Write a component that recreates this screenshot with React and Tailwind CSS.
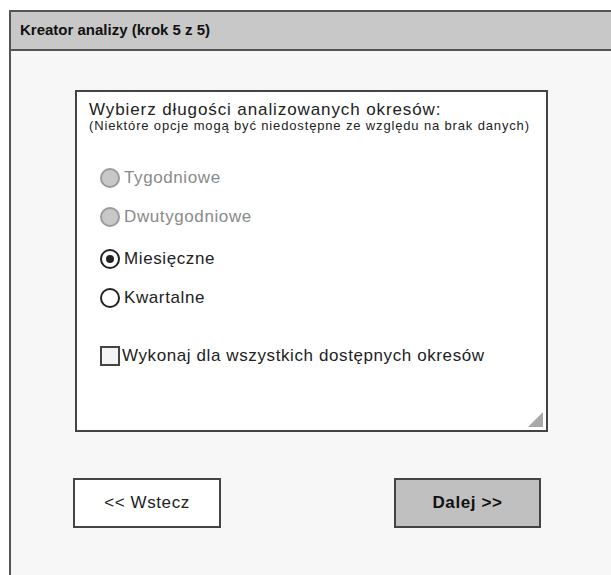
import React, { useState } from 'react';

const options = [
  { id: 'week', label: 'Tygodniowe', disabled: true, mt: 'mt-[33px]' },
  { id: 'twoweek', label: 'Dwutygodniowe', disabled: true, mt: 'mt-[15px]' },
  { id: 'month', label: 'Miesięczne', disabled: false, mt: 'mt-[18px]' },
  { id: 'quarter', label: 'Kwartalne', disabled: false, mt: 'mt-[15px]' },
];

function Radio({ checked, disabled }) {
  if (disabled) {
    return <span className="w-[20px] h-[20px] rounded-full border-2 border-[#9b9b9b] bg-[#c8c8c8] shrink-0" />;
  }
  return (
    <span className="w-[20px] h-[20px] rounded-full border-2 border-[#222] bg-white shrink-0 flex items-center justify-center">
      {checked && <span className="w-[8px] h-[8px] rounded-full bg-[#222]" />}
    </span>
  );
}

export default function App() {
  const [period, setPeriod] = useState('month');
  const [all, setAll] = useState(false);

  return (
    <div
      className="w-[611px] h-[575px] overflow-hidden bg-white pt-[10px] pl-[9px]"
      style={{ fontFamily: '"Liberation Sans", Arial, sans-serif' }}
    >
      <div className="w-[640px] h-[600px] border-2 border-[#555] bg-[#f7f7f7] flex flex-col">
        <div className="h-[39px] bg-[#c8c8c8] border-b-2 border-[#555] flex items-center pl-[9px]">
          <span className="text-[15px] font-bold text-[#111]">Kreator analizy (krok 5 z 5)</span>
        </div>

        <div className="ml-[64px] mt-[39px] w-[473px] h-[342px] border-2 border-[#444] bg-white flex flex-col pl-[12px] pt-[8px] text-[#222]">
          <div className="text-[17px] leading-[19px] tracking-[0.9px]">Wybierz długości analizowanych okresów:</div>
          <div className="text-[13px] leading-[14px] tracking-[0.85px]">(Niektóre opcje mogą być niedostępne ze względu na brak danych)</div>

          {options.map((o) => (
            <button
              key={o.id}
              type="button"
              disabled={o.disabled}
              onClick={() => setPeriod(o.id)}
              className={`${o.mt} ml-[11px] h-[24px] flex items-center gap-[4px] text-left`}
            >
              <Radio checked={period === o.id} disabled={o.disabled} />
              <span className={`text-[17px] tracking-[0.6px] ${o.disabled ? 'text-[#8a8a8a]' : 'text-[#222]'}`}>{o.label}</span>
            </button>
          ))}

          <button
            type="button"
            onClick={() => setAll(!all)}
            className="mt-[34px] ml-[11px] h-[24px] flex items-center gap-[2px] text-left"
          >
            <span className="w-[20px] h-[20px] border-2 border-[#444] bg-[#f4f4f4] shrink-0" />
            <span className="text-[17px] tracking-[0.6px] text-[#222]">Wykonaj dla wszystkich dostępnych okresów</span>
          </button>

          <svg className="mt-auto self-end mr-[3px] mb-[3px]" width="15" height="15" viewBox="0 0 15 15">
            <polygon points="15,0 15,15 0,15" fill="#a8a8a8" />
          </svg>
        </div>

        <div className="mt-[46px] flex">
          <button
            type="button"
            className="ml-[62px] w-[148px] h-[50px] border-2 border-[#444] bg-white text-[17px] tracking-[0.6px] text-[#222]"
          >
            &lt;&lt; Wstecz
          </button>
          <button
            type="button"
            className="ml-[173px] w-[147px] h-[50px] border-2 border-[#444] bg-[#c0c0c0] text-[17px] tracking-[0.6px] font-bold text-[#111]"
          >
            Dalej &gt;&gt;
          </button>
        </div>
      </div>
    </div>
  );
}
